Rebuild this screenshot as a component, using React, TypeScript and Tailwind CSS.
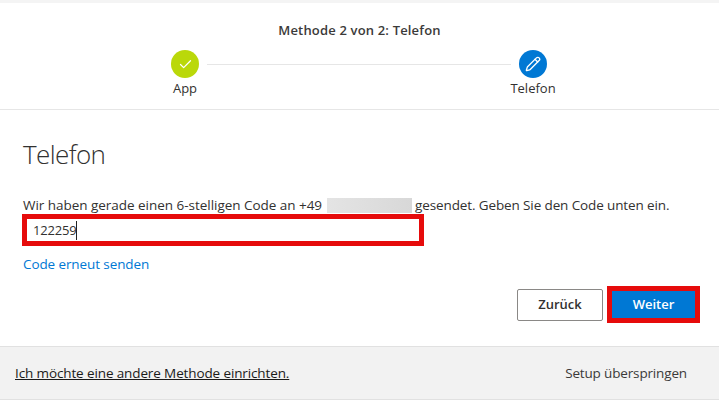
import { Check, Pencil } from 'lucide-react'

export default function App() {
  return (
    <div className="flex h-[400px] w-[719px] flex-col overflow-hidden bg-white font-['Open_Sans',sans-serif] text-[13.5px] text-[#323130]">
      <div className="h-[3px] bg-[#f4f4f4]" />

      <header className="h-[107px] border-b border-[#e6e6e6] pt-[18px]">
        <h2 className="text-center text-[13px] leading-[18px] font-semibold tracking-[0.17px] text-[#3b3a39]">Methode 2 von 2: Telefon</h2>
        <div className="mt-[11px] ml-[151px] flex w-[416px]">
          <div className="flex w-[68px] flex-col items-center">
            <span className="flex size-7 items-center justify-center rounded-full bg-[#bad80a]">
              <Check size={15} strokeWidth={2} className="text-white" />
            </span>
            <span className="mt-[1px] text-[13px] leading-[18px]">App</span>
          </div>
          <div className="mx-[-12px] mt-[14px] h-px flex-1 bg-[#e6e6e6]" />
          <div className="flex w-[68px] flex-col items-center">
            <span className="flex size-7 items-center justify-center rounded-full bg-[#0078d4]">
              <Pencil size={16} strokeWidth={2} className="text-white" />
            </span>
            <span className="mt-[1px] text-[13px] leading-[18px]">Telefon</span>
          </div>
        </div>
      </header>

      <main className="flex-1 pt-[25px] pl-[22px] pr-[19px]">
        <h1 className="pl-px text-[26px] leading-[38px] font-light tracking-[-0.6px] text-[#323130]">Telefon</h1>
        <p className="mt-[24px] flex items-center pl-px leading-[17px] whitespace-nowrap">
          <span className="tracking-[-0.03px]">Wir haben gerade einen 6-stelligen Code an +49</span>
          <span className="mr-[3px] ml-[5px] inline-block h-[15px] w-[85px] bg-gradient-to-r from-[#e4e4e4] to-[#d8d8d8]" />
          <span className="tracking-[-0.12px]">gesendet. Geben Sie den Code unten ein.</span>
        </p>
        <div className="flex h-[32px] w-[402px] items-center border-[5px] border-[#e60b0b] pt-px pl-[6px]">
          <span className="text-[13px] tracking-[-0.2px]">122259</span>
          <span className="h-[19px] w-px bg-[#222]" />
        </div>
        <a className="mt-[9px] ml-px block leading-[18px] tracking-[-0.1px] text-[#0078d4]">Code erneut senden</a>

        <div className="mt-[13px] flex items-center justify-end gap-[4px]">
          <button className="h-[32px] w-[86px] rounded-[2px] border border-[#8a8886] bg-white pt-px text-[13px] font-semibold text-[#323130]">
            Zurück
          </button>
          <div className="h-[37px] w-[93px] border-[5px] border-[#e60b0b]">
            <button className="h-full w-full bg-[#0078d4] pt-px text-[13px] font-semibold text-white">Weiter</button>
          </div>
        </div>
      </main>

      <footer className="flex h-[54px] items-center justify-between border-y border-[#e1e1e1] bg-[#f2f2f2] pr-[32px] pl-[15px]">
        <a className="tracking-[-0.12px] text-[#1b1a19] underline">Ich möchte eine andere Methode einrichten.</a>
        <a className="tracking-[-0.15px] text-[#3b3a39]">Setup überspringen</a>
      </footer>
    </div>
  )
}
